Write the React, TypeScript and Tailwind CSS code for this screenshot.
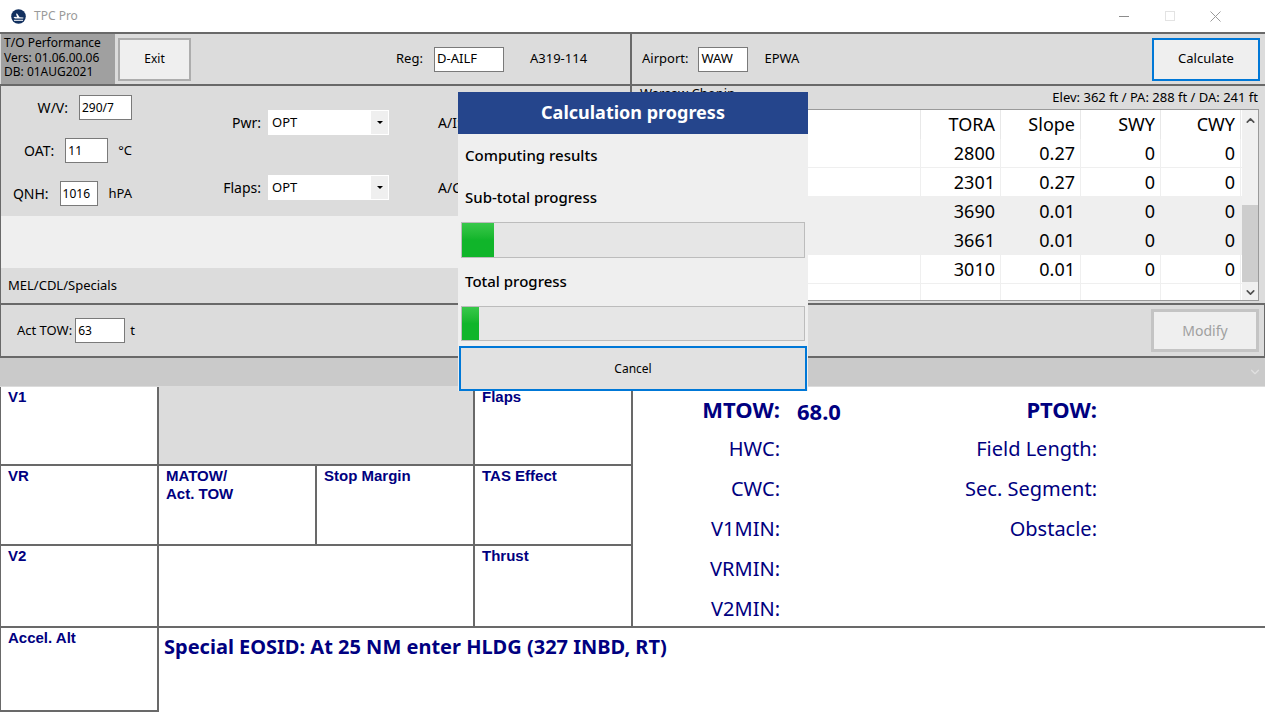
import React from 'react';
import { ChevronDown, ChevronUp } from 'lucide-react';

const ui = "font-['Noto_Sans',sans-serif]";
const arialBold = "font-['Liberation_Sans',Arial,sans-serif] font-bold text-[#000080] text-[15px] leading-[18px]";

const Field: React.FC<{ value: string; className?: string }> = ({ value, className = '' }) => (
  <div className={`h-[25px] bg-white border border-[#7a7a7a] flex items-center pl-[2px] text-black ${className}`}>{value}</div>
);

const Select: React.FC<{ label: string }> = ({ label }) => (
  <div className="flex items-center h-[25px]">
    <span className="w-[68px] text-right pr-[7px] text-[14px]">{label}</span>
    <div className="w-[121px] h-[25px] bg-white flex items-center justify-between p-px pl-[4px] text-[13px]">
      OPT
      <div className="w-[17px] h-full bg-[#efefef] flex items-center justify-center">
        <div className="w-0 h-0 border-x-[3px] border-x-transparent border-t-[3px] border-t-black" />
      </div>
    </div>
  </div>
);

const rows = [
  { tora: '2800', slope: '0.27', sel: false },
  { tora: '2301', slope: '0.27', sel: false },
  { tora: '3690', slope: '0.01', sel: true },
  { tora: '3661', slope: '0.01', sel: true },
  { tora: '3010', slope: '0.01', sel: false },
];

const Cell: React.FC<{ text?: string; className?: string; children?: React.ReactNode }> = ({ text, className = '', children }) => (
  <div className={`border-r-2 border-b-2 border-[#696969] pl-[7px] pt-px ${arialBold} ${className}`}>
    {text}
    {children}
  </div>
);

const Bar: React.FC<{ fill: string }> = ({ fill }) => (
  <div className="h-[36px] mx-[3px] border border-[#bcbcbc] bg-[#e6e6e6] flex">
    <div className={`${fill} h-full bg-gradient-to-b from-[#37c84a] via-[#10b52a] to-[#10b52a]`} />
  </div>
);

const SpeedRow: React.FC<{ a: string; b?: string; bold?: boolean }> = ({ a, b, bold }) => (
  <div className="grid grid-cols-[148px_317px] h-[40px] items-center text-right text-[20px] text-[#000080]">
    <span className={bold ? 'font-bold text-[22px]' : ''}>{a}</span>
    <span className={bold ? 'font-bold text-[22px]' : ''}>{b}</span>
  </div>
);

export default function App() {
  return (
    <div className={`relative w-[1265px] h-[713px] overflow-hidden bg-white text-black ${ui}`}>
      {/* Title bar */}
      <div className="h-[32px] flex items-center pl-[11px]">
        <svg width="15" height="15" viewBox="0 0 15 15">
          <circle cx="7.5" cy="7.5" r="7.3" fill="#12305f" />
          <path d="M2.5 8.2 4 7.8 6 8.2 5 4.6 6.3 4.8 8.6 8.3 12 8.6c.8.2.8 1-.1 1l-8-.1z" fill="#fff" />
          <rect x="3" y="10.8" width="9" height="1" fill="#fff" />
        </svg>
        <span className="ml-[8px] text-[12px] text-[#9a9a9a]">TPC Pro</span>
        <div className="ml-auto flex items-center">
          <svg width="130" height="14" viewBox="0 0 130 14" className="mr-[17px]">
            <path d="M1 7.5h10" stroke="#8c8c8c" />
            <rect x="47.5" y="2.5" width="9" height="9" fill="none" stroke="#e3e3e3" />
            <path d="M92.5 2.5l10 10m0-10l-10 10" stroke="#9a9a9a" />
          </svg>
        </div>
      </div>

      {/* Top rows */}
      <div className="h-[54px] flex border-y-2 border-[#696969] bg-[#dcdcdc]">
        <div className="w-[632px] flex items-center border-r-2 border-[#696969] shrink-0 text-[13px]">
          <div className="w-[114px] ml-px h-full bg-[#a0a0a0] pl-[3px] pt-[2px] text-[12px] leading-[14.7px]">
            <div>T/O Performance</div>
            <div>Vers: 01.06.00.06</div>
            <div>DB: 01AUG2021</div>
          </div>
          <div className="ml-[3px] w-[73px] h-[43px] border-2 border-[#adadad] bg-[#efefef] flex items-center justify-center text-[12px]">Exit</div>
          <span className="ml-[205px] w-[29px] text-[13px]">Reg:</span>
          <Field value="D-AILF" className="w-[70px] ml-[9px] text-[13px]" />
          <span className="ml-[26px]">A319-114</span>
        </div>
        <div className="flex-1 flex items-center text-[13px]">
          <span className="ml-[10px]">Airport:</span>
          <Field value="WAW" className="w-[50px] ml-[10px]" />
          <span className="ml-[16px]">EPWA</span>
          <div className="ml-auto mr-[5px] w-[108px] h-[43px] border-2 border-[#0078d7] bg-[#efefef] flex items-center justify-center">Calculate</div>
        </div>
      </div>

      {/* Middle */}
      <div className="h-[219px] flex">
        <div className="w-[632px] shrink-0 flex flex-col border-r-2 border-b-2 border-l border-[#696969]">
          <div className="h-[130px] bg-[#dcdcdc] flex pt-[9px] text-[14px]">
            <div className="w-[131px] flex flex-col gap-[18px]">
              <div className="flex items-center h-[25px]"><span className="w-[67px] text-right">W/V:</span><Field value="290/7" className="w-[53px] ml-[11px] text-[12px]" /></div>
              <div className="flex items-center h-[25px]"><span className="w-[67px] text-right">OAT:</span><Field value="11" className="w-[53px] ml-[11px] text-[12px]" /><span className="ml-[10px] text-[13px] whitespace-nowrap">°C</span></div>
              <div className="flex items-center h-[25px]"><span className="w-[67px] text-right">QNH:</span><Field value="1016" className="w-[53px] ml-[11px] text-[12px]" /><span className="ml-[10px] text-[13px] whitespace-nowrap">hPA</span></div>
            </div>
            <div className="ml-[68px] pt-[15px] flex flex-col gap-[40px] text-[13px]">
              <Select label="Pwr:" />
              <Select label="Flaps:" />
            </div>
            <div className="ml-[49px] pt-[15px] flex flex-col gap-[40px] text-[14px]">
              <div className="h-[25px] flex items-center">A/I:</div>
              <div className="h-[25px] flex items-center">A/C:</div>
            </div>
          </div>
          <div className="h-[52px] bg-[#efefef]" />
          <div className="flex-1 bg-[#dcdcdc] flex items-center pl-[7px] text-[13px]">MEL/CDL/Specials</div>
        </div>
        <div className="flex-1 flex flex-col bg-[#dcdcdc] border-b-2 border-[#696969]">
          <div className="h-[23px] flex items-center justify-between pl-[8px] pr-[7px] text-[13px]">
            <span className="-mt-[8px]">Warsaw Chopin</span>
            <span>Elev: 362 ft / PA: 288 ft / DA: 241 ft</span>
          </div>
          <div className="h-[192px] w-[627px] border border-[#9a9a9a] bg-white flex overflow-hidden text-[18px]">
            <div className="flex-1 flex flex-col">
              <div className="h-[29px] flex items-center">
                <div className="w-[288px] h-full border-r border-[#e8e8e8]" />
                {['TORA', 'Slope', 'SWY', 'CWY'].map((h) => (
                  <div key={h} className="w-[80px] h-full flex items-center justify-end pr-[5px] border-r border-[#e8e8e8]">{h}</div>
                ))}
              </div>
              {rows.map((r) => (
                <div key={r.tora} className={`h-[29px] flex border-b border-[#efefef] ${r.sel ? 'bg-[#efefef]' : ''}`}>
                  <div className="w-[288px] border-r border-[#efefef]" />
                  {[r.tora, r.slope, '0', '0'].map((v, i) => (
                    <div key={i} className="w-[80px] flex items-center justify-end pr-[5px] border-r border-[#efefef]">{v}</div>
                  ))}
                </div>
              ))}
              <div className="flex-1 flex">
                <div className="w-[288px] border-r border-[#efefef]" />
                {[0, 1, 2, 3].map((i) => <div key={i} className="w-[80px] border-r border-[#efefef]" />)}
              </div>
            </div>
            <div className="w-[16px] bg-[#f0f0f0] flex flex-col items-center justify-between">
              <ChevronUp size={13} strokeWidth={3} className="text-[#505050] mt-[4px]" />
              <div className="absolute top-[205px] h-[77px] w-[16px] bg-[#cdcdcd]" />
              <ChevronDown size={13} strokeWidth={3} className="text-[#505050] mb-[1px]" />
            </div>
          </div>
        </div>
      </div>

      {/* Act TOW row */}
      <div className="h-[53px] flex items-center bg-[#dcdcdc] border-b-2 border-x border-[#696969] text-[13px]">
        <span className="ml-[16px]">Act TOW:</span>
        <Field value="63" className="w-[50px] ml-[3px] text-[12px]" />
        <span className="ml-[5px]">t</span>
        <div className="ml-auto mr-[5px] w-[108px] h-[43px] border-[3px] border-[#c4c4c4] bg-[#efefef] text-[#a0a0a0] flex items-center justify-center text-[14px]">Modify</div>
      </div>

      {/* Collapsed strip */}
      <div className="h-[29px] bg-[#cacaca] border-b border-[#dcdcdc] flex items-center justify-end pr-[3px]">
        <ChevronDown size={14} className="text-[#e0e0e0]" />
      </div>

      {/* Results grid */}
      <div className="grid grid-cols-[158px_158px_158px_158px_1fr] grid-rows-[79px_80px_82px_84px] border-l border-[#696969]">
        <Cell text="V1" />
        <Cell className="col-span-2 bg-[#dcdcdc]" />
        <Cell text="Flaps" />
        <div className="row-span-3 border-b-2 border-[#696969] pt-[2px] -ml-px">
          <SpeedRow a="MTOW:" b="PTOW:" bold />
          <SpeedRow a="HWC:" b="Field Length:" />
          <SpeedRow a="CWC:" b="Sec. Segment:" />
          <SpeedRow a="V1MIN:" b="Obstacle:" />
          <SpeedRow a="VRMIN:" />
          <SpeedRow a="V2MIN:" />
        </div>
        <Cell text="VR" />
        <Cell><div>MATOW/</div><div>Act. TOW</div></Cell>
        <Cell text="Stop Margin" />
        <Cell text="TAS Effect" />
        <Cell text="V2" />
        <Cell className="col-span-2" />
        <Cell text="Thrust" />
        <Cell text="Accel. Alt" />
        <div className={`col-span-4 pl-[5px] pt-[4px] text-[20px] font-bold text-[#000080] ${ui}`}>Special EOSID: At 25 NM enter HLDG (327 INBD, RT)</div>
      </div>

      {/* MTOW value sits over the results panel */}
      <span className="absolute left-[797px] top-[395px] text-[22px] font-bold text-[#000080]">68.0</span>

      {/* Progress dialog */}
      <div className="absolute left-[458px] top-[92px] w-[350px] h-[299px] bg-[#efefef] flex flex-col">
        <div className="h-[42px] bg-[#25458c] text-white text-[18px] font-bold flex items-center justify-center">Calculation progress</div>
        <div className="h-[44px] flex items-center pl-[7px] text-[15px] font-medium">Computing results</div>
        <div className="h-[40px] flex items-center pl-[7px] text-[15px] font-medium">Sub-total progress</div>
        <div className="h-[5px]" />
        <Bar fill="w-[32px]" />
        <div className="h-[48px] flex items-center pl-[7px] text-[15px] font-medium">Total progress</div>
        <Bar fill="w-[17px]" />
        <div className="mt-[5px] mx-[1px] h-[45px] border-2 border-[#0078d7] bg-[#e1e1e1] flex items-center justify-center text-[12px]">Cancel</div>
      </div>
    </div>
  );
}
